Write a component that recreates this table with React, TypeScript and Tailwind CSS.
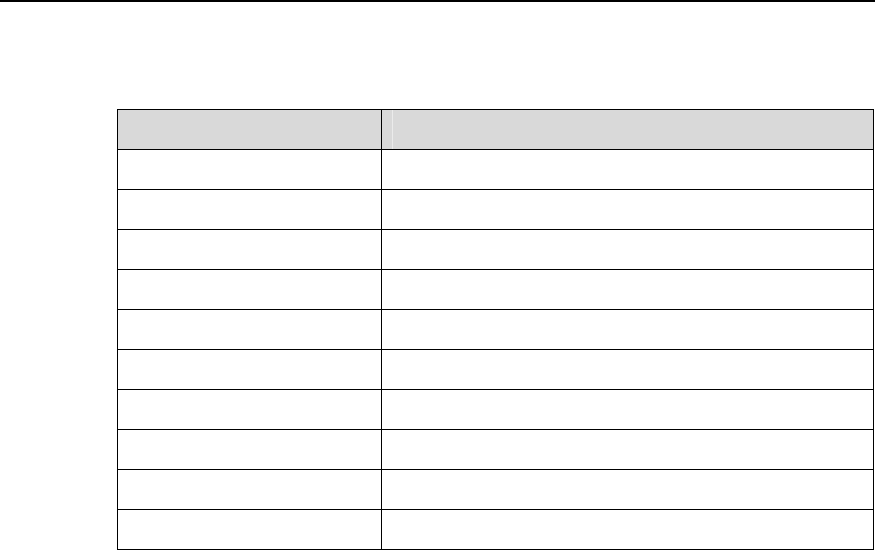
import React from 'react';

const rowCount = 10;

const App: React.FC = () => {
  return (
    <div className="w-[875px] h-[550px] bg-white flex flex-col overflow-hidden font-['Liberation_Sans',sans-serif]">
      <div className="h-[2px] w-full bg-black" />

      <div className="mt-[107px] ml-[117px] w-[757px] border border-black flex flex-col">
        {/* header */}
        <div className="grid grid-cols-[264px_1fr] h-[40px] border-b border-black bg-[#d9d9d9]">
          <div className="border-r border-black" />
          <div className="flex">
            <div className="ml-[10px] w-px h-full bg-[#ebebeb]" />
          </div>
        </div>

        {Array.from({ length: rowCount }).map((_, i) => (
          <div
            key={i}
            className={`grid grid-cols-[264px_1fr] ${i < rowCount - 1 ? 'h-[40px] border-b border-black' : 'h-[39px]'}`}
          >
            <div className="border-r border-black" />
            <div />
          </div>
        ))}
      </div>
    </div>
  );
};

export default App;
